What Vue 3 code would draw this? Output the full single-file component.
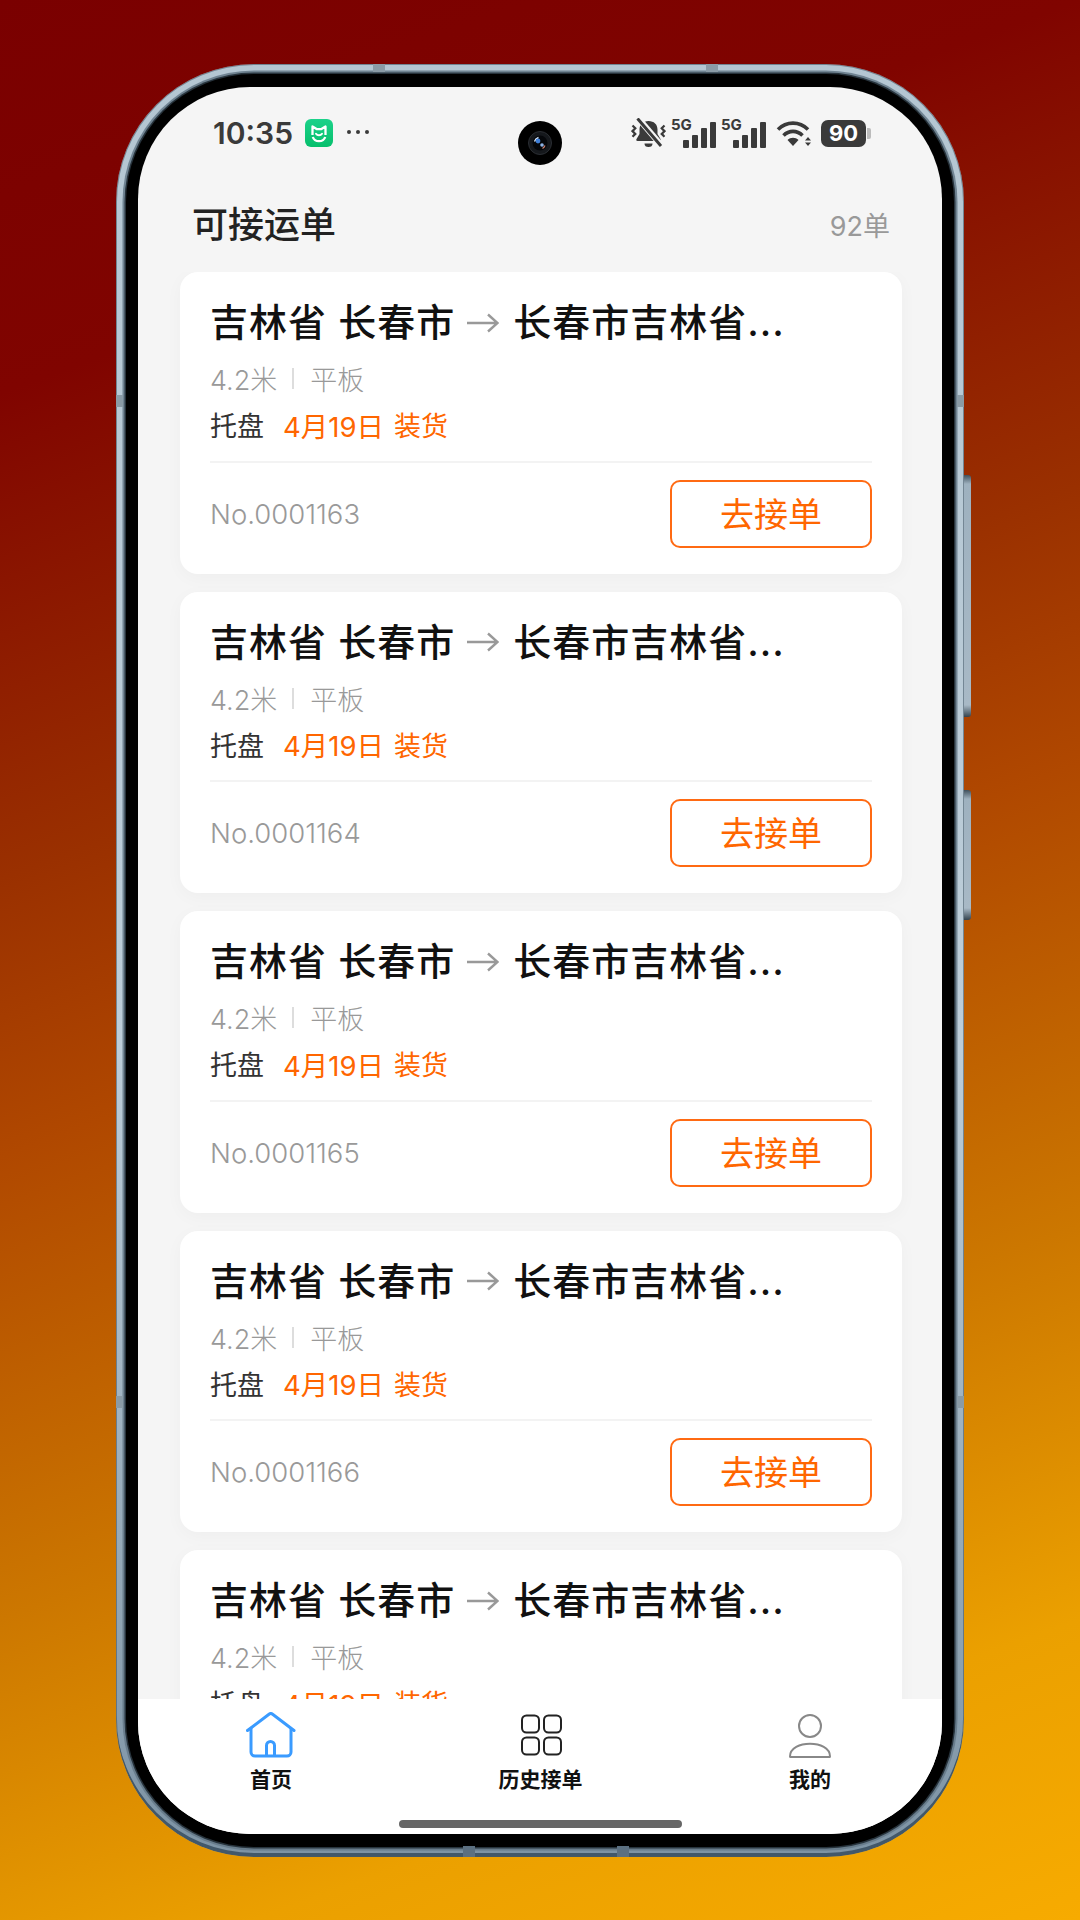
<script setup>
const orders = [1163, 1164, 1165, 1166, 1167].map((n) => ({
  no: 'No.000' + n,
  from: '吉林省 长春市',
  to: '长春市吉林省...',
}));
</script>

<template>
  <div class="page">
    <div class="phone">
      <i class="band band-top" style="left: 257px"></i>
      <i class="band band-top" style="left: 590px"></i>
      <i class="band band-bottom" style="left: 347px"></i>
      <i class="band band-bottom" style="left: 501px"></i>
      <i class="band band-side" style="left: 0; top: 331px"></i>
      <i class="band band-side" style="left: 0; top: 1332px"></i>
      <i class="band band-side" style="right: 0; top: 331px"></i>
      <i class="band band-side" style="right: 0; top: 1332px"></i>
      <i class="side-key key-up"></i>
      <i class="side-key key-down"></i>
      <div class="bezel">
        <div class="screen">
          <!-- status bar -->
          <div class="status">
            <div class="status-left">
              <span class="time">10:35</span>
              <svg class="mi" viewBox="0 0 28 28">
                <defs>
                  <linearGradient id="mi" x1="0" y1="0" x2="0" y2="1">
                    <stop offset="0" stop-color="#1cd28a" />
                    <stop offset="1" stop-color="#06bf6c" />
                  </linearGradient>
                </defs>
                <rect width="28" height="28" rx="6" fill="url(#mi)" />
                <path d="M7.5 16V7.5L12 10.2h4l4.500-2.700V16" fill="none" stroke="#fff" stroke-width="2.3" stroke-linejoin="round" />
                <path d="M7.800 18c1.800 5.600 10.600 5.600 12.400 0" fill="none" stroke="#fff" stroke-width="2.3" />
                <path d="M11 14.800c1.400 2 4.600 2 6 0" fill="none" stroke="#fff" stroke-width="2" stroke-linecap="round" />
              </svg>
              <span class="dots"><i></i><i></i><i></i></span>
            </div>
            <div class="status-right">
              <svg class="bell" viewBox="0 0 35 30">
                <path d="M17.500 3c-5.500 0-9 3.500-9 8.500v4.500l-3 5c-.6 1 0 2 1 2h22c1 0 1.600-1 1-2l-3-5v-4.500c0-5-3.500-8.500-9-8.500z" fill="#3a3a3a" />
                <path d="M13.500 25.500h8a4 3.500 0 0 1-8 0z" fill="#3a3a3a" />
                <path d="M7 0L30 27" stroke="#f5f5f5" stroke-width="6" />
                <path d="M6.500 0.500L30 28" stroke="#3a3a3a" stroke-width="3" />
                <path d="M1.500 7.500l2.800 2.800-2.800 2.800 2.800 2.800-2.800 2.800M33.500 7.500l-2.800 2.800 2.800 2.800-2.800 2.800 2.800 2.800" fill="none" stroke="#3a3a3a" stroke-width="2.200" />
              </svg>
              <div v-for="s in 2" :key="s" class="signal">
                <span class="five-g">5G</span>
                <i style="height: 8px"></i>
                <i style="height: 13px"></i>
                <i style="height: 20px"></i>
                <i style="height: 26px"></i>
              </div>
              <svg class="wifi" viewBox="0 0 36 27">
                <path d="M2 9.500C10.500 1 23.500 1 32 9.500" fill="none" stroke="#3a3a3a" stroke-width="3.600" />
                <path d="M7.500 15.500c5.500-5.500 13.500-5.500 19 0" fill="none" stroke="#3a3a3a" stroke-width="3.600" />
                <path d="M11.500 20c3-3 8-3 11 0L17 26z" fill="#3a3a3a" />
                <path d="M29 20.500l3-3.500 3 3.500zM29 22.500l3 3.500 3-3.500z" fill="#3a3a3a" />
              </svg>
              <div class="battery"><span>90</span></div>
            </div>
          </div>
          <div class="camera">
            <svg class="lens" viewBox="0 0 24 24">
              <circle cx="12" cy="12" r="11.500" fill="#15181c" stroke="#2b2e33" />
              <circle cx="12" cy="12" r="7.500" fill="#05070a" />
              <path d="M6.500 10.500a6 6 0 0 1 4-4" fill="none" stroke="#dfe9f5" stroke-width="1.400" />
              <circle cx="10" cy="10" r="2.400" fill="#3f7fd8" />
              <circle cx="14" cy="14" r="1.800" fill="#8fb4e6" />
              <path d="M17 14.500a6 6 0 0 1-2.500 3" fill="none" stroke="#c77f6f" stroke-width="1.200" />
            </svg>
          </div>

          <!-- header -->
          <div class="head">
            <span class="head-title">可接运单</span>
            <span class="head-count">92单</span>
          </div>

          <!-- list -->
          <div class="list">
            <div v-for="o in orders" :key="o.no" class="card">
              <div class="route">
                <span>{{ o.from }}</span>
                <svg class="arrow" viewBox="0 0 32 20">
                  <path d="M0 10h30M21 1.500L30.500 10 21 18.500" fill="none" stroke="#999" stroke-width="2.400" />
                </svg>
                <span>{{ o.to }}</span>
              </div>
              <div class="spec">
                <span>4.2米</span>
                <i class="sep"></i>
                <span>平板</span>
              </div>
              <div class="goods">
                <span>托盘</span>
                <span class="date">4月19日</span>
                <span class="load">装货</span>
              </div>
              <div class="foot">
                <span class="no">{{ o.no }}</span>
                <button class="take">去接单</button>
              </div>
            </div>
          </div>

          <!-- tabs -->
          <div class="tabs">
            <div class="tab">
              <svg class="tab-icon" viewBox="0 0 50 46">
                <path d="M1.500 18.500L23 2.200a3 3 0 0 1 3.600 0L48 18.500" fill="none" stroke="#3a9bff" stroke-width="3" stroke-linecap="round" stroke-linejoin="round" />
                <path d="M5 16v24a4 4 0 0 0 4 4h32a4 4 0 0 0 4-4V16M20.500 44V33.500a4 4 0 0 1 8 0V44" fill="none" stroke="#3a9bff" stroke-width="3" />
              </svg>
              <span>首页</span>
            </div>
            <div class="tab">
              <svg class="tab-icon" viewBox="0 0 50 46">
                <rect x="6" y="3.500" width="17" height="17" rx="4.500" fill="none" stroke="#222" stroke-width="2" />
                <rect x="28" y="3.500" width="17" height="17" rx="4.500" fill="none" stroke="#222" stroke-width="2" />
                <rect x="6" y="25.500" width="17" height="17" rx="4.500" fill="none" stroke="#222" stroke-width="2" />
                <rect x="28" y="25.500" width="17" height="17" rx="4.500" fill="none" stroke="#222" stroke-width="2" />
              </svg>
              <span>历史接单</span>
            </div>
            <div class="tab">
              <svg class="tab-icon" viewBox="0 0 50 46">
                <circle cx="25" cy="14" r="11" fill="none" stroke="#888" stroke-width="2" />
                <path d="M5 44.500c0-17 40-17 40 0a.5.5 0 0 1-.5.500H5.500a.5.5 0 0 1-.5-.500z" fill="none" stroke="#888" stroke-width="2" />
              </svg>
              <span>我的</span>
            </div>
            <i class="home-bar"></i>
          </div>
        </div>
      </div>
    </div>
  </div>
</template>

<style>
html,
body {
  margin: 0;
  background: #b04800;
}
</style>

<style scoped>
.page {
  width: 1080px;
  height: 1920px;
  padding-top: 64px;
  box-sizing: border-box;
  overflow: hidden;
  background: linear-gradient(160deg, #7a0000 0%, #800400 17%, #9a3000 38%, #b04800 50%, #cc7700 70%, #eba000 87%, #f7ab00 100%);
  font-family: Inter, "Noto Sans CJK SC", sans-serif;
}

.phone {
  position: relative;
  width: 848px;
  height: 1793px;
  margin: 0 auto;
  padding: 10px;
  box-sizing: border-box;
  border-radius: 138px;
  background: linear-gradient(180deg, #b4c6d2 0%, #bccdd9 55%, #84998a00 100%), #7d93a4;
  box-shadow: inset 0 0 0 1px rgba(70, 90, 105, 0.6), inset 0 -4px 0 #42586a;
}

.band {
  position: absolute;
  z-index: 1;
  background: #8a9ba6;
}
.band-top {
  top: 0;
  width: 12px;
  height: 8px;
}
.band-bottom {
  bottom: 0;
  width: 12px;
  height: 11px;
  background: #5c7081;
}
.band-side {
  width: 7px;
  height: 12px;
}

.side-key {
  position: absolute;
  right: -7px;
  width: 7px;
  border-radius: 0 3px 3px 0;
  background: linear-gradient(180deg, #40505c 0, #9eb1bf 9px, #a8b9c6 calc(100% - 12px), #34434e 100%);
}
.key-up {
  top: 411px;
  height: 242px;
}
.key-down {
  top: 726px;
  height: 130px;
}

.bezel {
  position: relative;
  height: 100%;
  padding: 13px 12px;
  box-sizing: border-box;
  border-radius: 128px;
  background: #000;
  box-shadow: 0 0 0 1.5px #27333c, 0 0 0 3.5px rgba(100, 120, 135, 0.85);
}

.screen {
  position: relative;
  display: flex;
  flex-direction: column;
  height: 100%;
  overflow: hidden;
  border-radius: 112px;
  background: #f5f5f5;
}

/* status bar */
.status {
  display: flex;
  flex: none;
  align-items: center;
  justify-content: space-between;
  height: 92px;
  padding: 0 76px 0 75px;
  box-sizing: border-box;
  color: #3a3a3a;
}
.status-left,
.status-right {
  display: flex;
  align-items: center;
}
.time {
  font-size: 30px;
  font-weight: 600;
  line-height: 1;
}
.mi {
  width: 28px;
  height: 28px;
  margin-left: 12px;
}
.dots {
  display: flex;
  gap: 5px;
  margin-left: 14px;
  margin-bottom: 2px;
}
.dots i {
  width: 4px;
  height: 4px;
  border-radius: 50%;
  background: #3a3a3a;
}
.bell {
  width: 35px;
  height: 30px;
}
.signal {
  position: relative;
  display: flex;
  align-items: flex-end;
  gap: 3.5px;
  width: 33px;
  height: 29px;
  margin-left: 17px;
}
.signal i {
  width: 5.5px;
  border-radius: 1px;
  background: #3a3a3a;
}
.five-g {
  position: absolute;
  top: -2px;
  left: -12px;
  font-size: 15px;
  font-weight: 700;
  line-height: 15px;
}
.wifi {
  width: 36px;
  height: 27px;
  margin-left: 10px;
}
.battery {
  position: relative;
  display: flex;
  align-items: center;
  justify-content: center;
  width: 45px;
  height: 27px;
  margin-left: 9px;
  border-radius: 7px;
  background: #3a3a3a;
}
.battery span {
  color: #fff;
  font-size: 22px;
  font-weight: 700;
  line-height: 1;
}
.battery::after {
  content: "";
  position: absolute;
  top: 8px;
  right: -5px;
  width: 4px;
  height: 11px;
  border-radius: 0 2px 2px 0;
  background: #bbb;
}

.camera {
  position: absolute;
  top: 34px;
  left: 380px;
  display: flex;
  align-items: center;
  justify-content: center;
  width: 44px;
  height: 44px;
  border-radius: 50%;
  background: #000;
}
.lens {
  width: 24px;
  height: 24px;
}

/* header */
.head {
  display: flex;
  flex: none;
  align-items: center;
  justify-content: space-between;
  height: 93px;
  padding: 0 52px 8px 54px;
  box-sizing: border-box;
}
.head-title {
  color: #222;
  font-size: 36px;
  font-weight: 500;
}
.head-count {
  margin-top: 6px;
  color: #999;
  font-size: 27px;
}

/* list */
.list {
  display: flex;
  flex: 1;
  flex-direction: column;
  gap: 18px;
  min-height: 0;
  padding: 0 40px 0 42px;
  overflow: hidden;
}
.card {
  flex: none;
  height: 301.6px;
  padding: 0 30px;
  box-sizing: border-box;
  border-radius: 18px;
  background: #fff;
  box-shadow: 0 4px 18px rgba(0, 0, 0, 0.03);
}
.route {
  display: flex;
  align-items: center;
  height: 37px;
  padding-top: 32px;
  color: #111;
  font-size: 38px;
  font-weight: 500;
  letter-spacing: 1px;
  line-height: 37px;
  white-space: nowrap;
  box-sizing: content-box;
}
.arrow {
  flex: none;
  width: 32px;
  height: 20px;
  margin: 0 14px 0 12px;
}
.spec {
  display: flex;
  align-items: center;
  height: 36px;
  margin-top: 19.5px;
  color: #999;
  font-size: 27px;
  font-weight: 300;
}
.sep {
  width: 2px;
  height: 21px;
  margin: 0 16px 0 15px;
  background: #ddd;
}
.goods {
  display: flex;
  align-items: center;
  height: 36px;
  margin-top: 10px;
  color: #333;
  font-size: 27px;
}
.date {
  margin-left: 19px;
  color: #ff6600;
  font-size: 27.5px;
}
.load {
  margin-left: 10px;
  color: #ff6600;
}
.foot {
  display: flex;
  align-items: center;
  justify-content: space-between;
  height: 104px;
  margin-top: 18px;
  border-top: 2px solid #f3f3f3;
  box-sizing: border-box;
}
.no {
  color: #999;
  font-size: 27.5px;
  font-weight: 300;
}
.take {
  width: 202px;
  height: 68px;
  padding: 0 0 3px;
  box-sizing: border-box;
  border: 2px solid #ff6a13;
  border-radius: 10px;
  background: #fff;
  color: #ff6600;
  font-family: inherit;
  font-size: 34px;
}

/* tabs */
.tabs {
  position: relative;
  display: flex;
  flex: none;
  gap: 69.5px;
  height: 135px;
  padding: 13px 0 0 33px;
  box-sizing: border-box;
  background: #fff;
}
.tab {
  display: flex;
  flex-direction: column;
  align-items: center;
  width: 200px;
  color: #111;
  font-size: 21px;
  font-weight: 700;
  line-height: 28px;
}
.tab-icon {
  width: 50px;
  height: 46px;
  margin-bottom: 8px;
}
.home-bar {
  position: absolute;
  bottom: 6px;
  left: 261px;
  width: 283px;
  height: 8px;
  border-radius: 4px;
  background: #666;
}
</style>
